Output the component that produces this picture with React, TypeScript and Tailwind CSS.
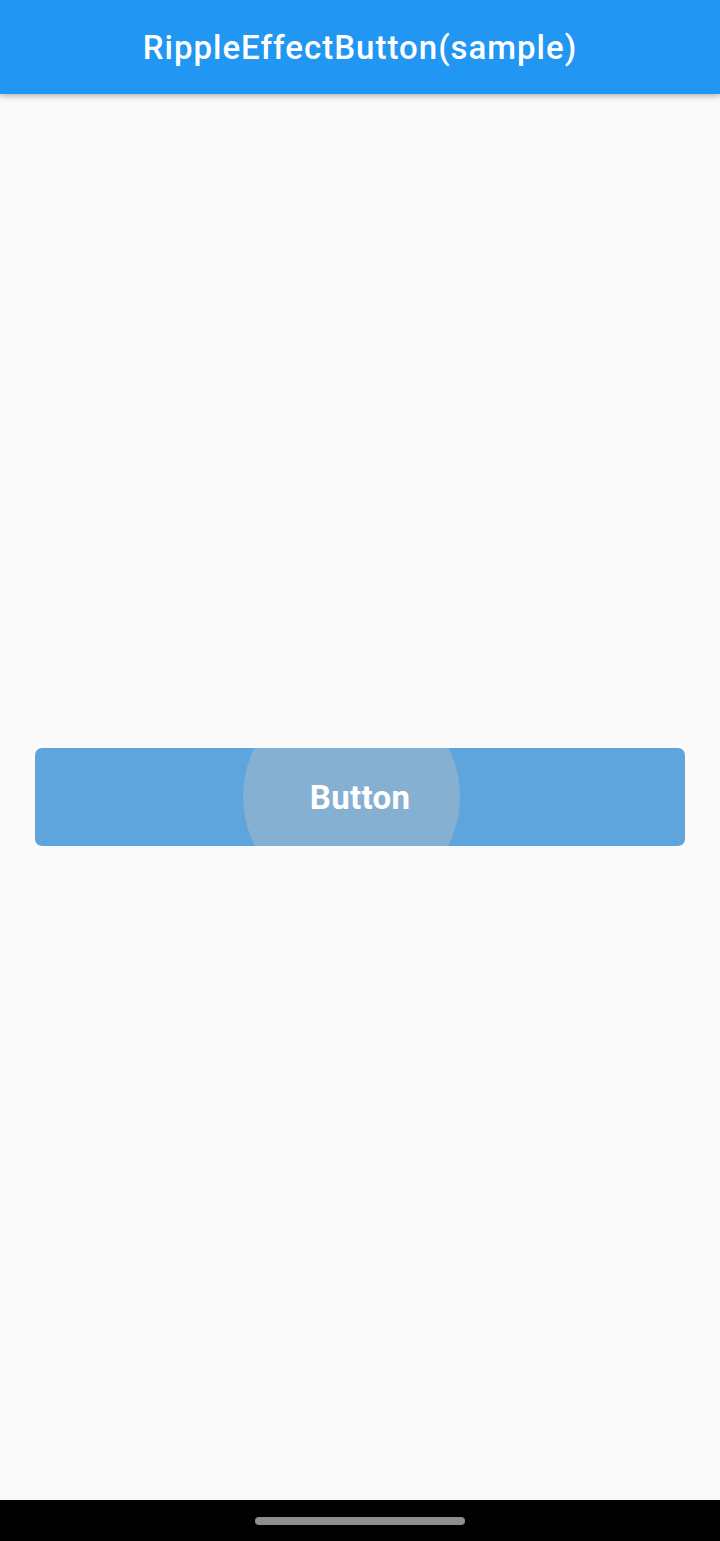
import React from "react";

export default function App() {
  return (
    <div className="flex h-[1541px] w-[720px] flex-col bg-[#fafafa]" style={{ fontFamily: "Roboto, 'Noto Sans', sans-serif" }}>
      <header className="relative z-10 flex h-[94px] shrink-0 items-center justify-center bg-[#2196f3] shadow-[0_2px_6px_rgba(0,0,0,0.3)]">
        <h1 className="text-[33px] font-medium leading-none tracking-[1px] text-white">RippleEffectButton(sample)</h1>
      </header>
      <main className="flex flex-1 flex-col justify-start px-[35px] pt-[654px]">
        <button className="relative flex h-[98px] w-full items-center justify-center overflow-hidden rounded-[7px] bg-[#5fa5dd]">
          <span className="absolute left-[208px] top-[-60px] h-[217px] w-[217px] rounded-full bg-[#86b0d2]" />
          <span className="relative text-[33px] font-bold leading-none tracking-[0.3px] text-white">Button</span>
        </button>
      </main>
      <footer className="flex h-[41px] shrink-0 items-center justify-center bg-black">
        <div className="h-[8px] w-[210px] rounded-full bg-[#8e8e8e]" />
      </footer>
    </div>
  );
}
